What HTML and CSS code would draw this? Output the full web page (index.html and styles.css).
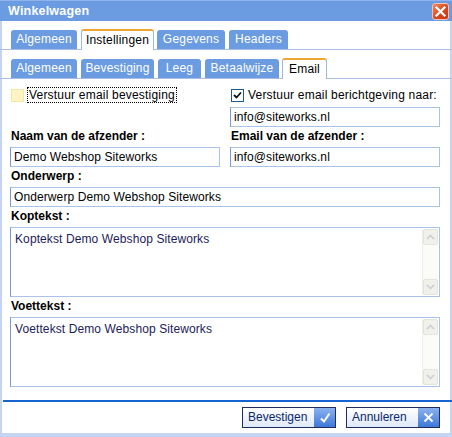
FILE: index.html
```html
<!DOCTYPE html>
<html lang="nl">
<head>
  <meta charset="UTF-8">
  <title>Winkelwagen</title>
  <link rel="stylesheet" href="styles.css">
</head>
<body>
  <div class="window">
    <div class="titlebar">
      <span class="title">Winkelwagen</span>
      <span class="close">
        <svg width="11" height="11" viewBox="0 0 11 11"><path d="M1.5 1.5 L9.5 9.5 M9.5 1.5 L1.5 9.5" stroke="#fff" stroke-width="2.2" stroke-linecap="square"/></svg>
      </span>
    </div>

    <div class="tabs first">
      <span class="tab w-alg">Algemeen</span>
      <span class="tab active w-ins">Instellingen</span>
      <span class="tab w-geg">Gegevens</span>
      <span class="tab w-hea">Headers</span>
    </div>

    <div class="tabs second">
      <span class="tab w-alg">Algemeen</span>
      <span class="tab w-bev">Bevestiging</span>
      <span class="tab w-lee">Leeg</span>
      <span class="tab w-bet">Betaalwijze</span>
      <span class="tab active w-ema">Email</span>
    </div>

    <div class="form">
      <div class="row check-row">
        <label class="check">
          <span class="box yellow"></span>
          <span class="focus">Verstuur email bevestiging</span>
        </label>
        <label class="check">
          <span class="box checked">
            <svg width="9" height="9" viewBox="0 0 9 9"><path d="M1 4 L3.5 6.5 L8 1.5" fill="none" stroke="#111" stroke-width="1.8"/></svg>
          </span>
          <span>Verstuur email berichtgeving naar:</span>
        </label>
      </div>
      <div class="row">
        <div></div>
        <div class="input">info@siteworks.nl</div>
      </div>

      <div class="row">
        <div class="label">Naam van de afzender :</div>
        <div class="label">Email van de afzender :</div>
      </div>
      <div class="row">
        <div class="input">Demo Webshop Siteworks</div>
        <div class="input">info@siteworks.nl</div>
      </div>

      <div class="label">Onderwerp :</div>
      <div class="input">Onderwerp Demo Webshop Siteworks</div>

      <div class="label">Koptekst :</div>
      <div class="area">
        <span class="area-text">Koptekst Demo Webshop Siteworks</span>
        <div class="scroll">
          <span class="arrow"><svg width="9" height="6" viewBox="0 0 9 6"><path d="M1 5 L4.5 1.5 L8 5" fill="none" stroke="#c9ccd0" stroke-width="1.5"/></svg></span>
          <span class="arrow"><svg width="9" height="6" viewBox="0 0 9 6"><path d="M1 1 L4.5 4.5 L8 1" fill="none" stroke="#c9ccd0" stroke-width="1.5"/></svg></span>
        </div>
      </div>

      <div class="label">Voettekst :</div>
      <div class="area">
        <span class="area-text">Voettekst Demo Webshop Siteworks</span>
        <div class="scroll">
          <span class="arrow"><svg width="9" height="6" viewBox="0 0 9 6"><path d="M1 5 L4.5 1.5 L8 5" fill="none" stroke="#c9ccd0" stroke-width="1.5"/></svg></span>
          <span class="arrow"><svg width="9" height="6" viewBox="0 0 9 6"><path d="M1 1 L4.5 4.5 L8 1" fill="none" stroke="#c9ccd0" stroke-width="1.5"/></svg></span>
        </div>
      </div>
    </div>

    <div class="footer">
      <button class="btn">
        <span class="btn-text">Bevestigen</span>
        <span class="btn-icon">
          <svg width="12" height="12" viewBox="0 0 12 12"><path d="M2 6.5 L5 9.5 L10.5 1.5" fill="none" stroke="#fff" stroke-width="2"/></svg>
        </span>
      </button>
      <button class="btn">
        <span class="btn-text">Annuleren</span>
        <span class="btn-icon">
          <svg width="11" height="11" viewBox="0 0 11 11"><path d="M1.5 1.5 L9.5 9.5 M9.5 1.5 L1.5 9.5" stroke="#fff" stroke-width="1.8"/></svg>
        </span>
      </button>
    </div>
  </div>
</body>
</html>
```

FILE: styles.css
```css
* {
  margin: 0;
  padding: 0;
  box-sizing: border-box;
}

body {
  background: #fff;
  font-family: 'Liberation Sans', Arial, sans-serif;
  font-size: 12px;
  color: #000;
}

.window {
  width: 452px;
  height: 437px;
  border: 2px solid #c6d4f4;
  border-top: 0;
  border-bottom-width: 4px;
  background: #fff;
}

.titlebar {
  height: 21px;
  margin: 0 -2px;
  background: #6b9be0;
  border-top: 1px solid #8fb3ec;
  display: flex;
  align-items: center;
  justify-content: space-between;
  padding: 0 3px 0 8px;
}

.title {
  color: #fff;
  font-weight: bold;
  font-size: 12.5px;
  letter-spacing: 0.2px;
}

.close {
  width: 17px;
  height: 17px;
  border: 1px solid #f4c2b0;
  border-radius: 3px;
  background: linear-gradient(135deg, #f08a5c, #d8431c 60%, #c23a14);
  display: flex;
  align-items: center;
  justify-content: center;
}

/* tab strips */
.tabs {
  display: flex;
  align-items: flex-end;
  height: 20px;
  border-bottom: 1px solid #a9bde6;
  margin: 9px -2px 0;
  padding-left: 11px;
}

.tab {
  height: 19px;
  margin-right: 4px;
  background: #6b9be0;
  color: #fff;
  border-radius: 3px 3px 0 0;
  text-align: center;
  line-height: 19px;
  letter-spacing: 0.2px;
}

.tab.active {
  height: 21px;
  margin-bottom: -1px;
  background: #fff;
  color: #000;
  border: 1px solid #9fb6e2;
  border-bottom: 0;
  border-top: 2px solid #f0a530;
  line-height: 18px;
}

.w-alg { width: 66px; }
.w-ins { width: 73px; margin-right: 3px; }
.w-geg { width: 68px; }
.w-hea { width: 59px; }
.w-bev { width: 73px; }
.w-lee { width: 43px; }
.w-bet { width: 74px; margin-right: 3px; }
.w-ema { width: 45px; }

/* form */
.form {
  padding: 8px 10px 0 8px;
}

.row {
  display: grid;
  grid-template-columns: 210px 210px;
  column-gap: 10px;
}

.check-row {
  height: 20px;
}

.check {
  display: flex;
  align-items: center;
  height: 16px;
  gap: 4px;
  padding-left: 1px;
  letter-spacing: 0.2px;
}

.box {
  width: 13px;
  height: 13px;
  display: flex;
  align-items: center;
  justify-content: center;
}

.box.yellow {
  background: #fff4c4;
  border: 1px solid #f2e6a6;
}

.box.checked {
  background: #fff;
  border: 1px solid #1d5a8c;
}

.focus {
  outline: 1px dotted #000;
  padding: 0 1px;
  line-height: 14px;
}

.label {
  height: 20px;
  line-height: 19px;
  font-weight: bold;
  padding-left: 1px;
}

.input {
  height: 20px;
  border: 1px solid #a9c2ea;
  border-left-color: #7b9ad4;
  padding-left: 3px;
  line-height: 18px;
  background: #fff;
  white-space: nowrap;
  letter-spacing: 0.1px;
}

.area {
  height: 70px;
  border: 1px solid #a9c2ea;
  border-left-color: #7b9ad4;
  display: flex;
  justify-content: space-between;
}

.area-text {
  padding: 4px 0 0 4px;
  color: #1c1c58;
  letter-spacing: 0.1px;
}

.scroll {
  width: 16px;
  margin: 1px 1px 1px 0;
  background: #fbfbf8;
  border-left: 1px solid #eeeeea;
  display: flex;
  flex-direction: column;
  justify-content: space-between;
}

.arrow {
  height: 16px;
  background: #f1f1ec;
  border: 1px solid #e4e4de;
  border-radius: 2px;
  display: flex;
  align-items: center;
  justify-content: center;
}

/* footer */
.footer {
  margin: 13px -2px 0 1px;
  border-top: 2px solid #1664d2;
  display: flex;
  justify-content: flex-end;
  gap: 10px;
  padding: 5px 12px 0 0;
}

.btn {
  width: 94px;
  height: 21px;
  border: 1px solid #1e2d5e;
  background: linear-gradient(#ffffff, #dfe8f8);
  display: flex;
  justify-content: space-between;
  align-items: stretch;
  font-family: 'Liberation Sans', Arial, sans-serif;
  font-size: 12px;
  color: #0b2a6a;
  cursor: pointer;
}

.btn-text {
  padding-left: 5px;
  line-height: 19px;
}

.btn-icon {
  width: 21px;
  background: linear-gradient(#8ab2f0, #3f78d8);
  display: flex;
  align-items: center;
  justify-content: center;
}
```
